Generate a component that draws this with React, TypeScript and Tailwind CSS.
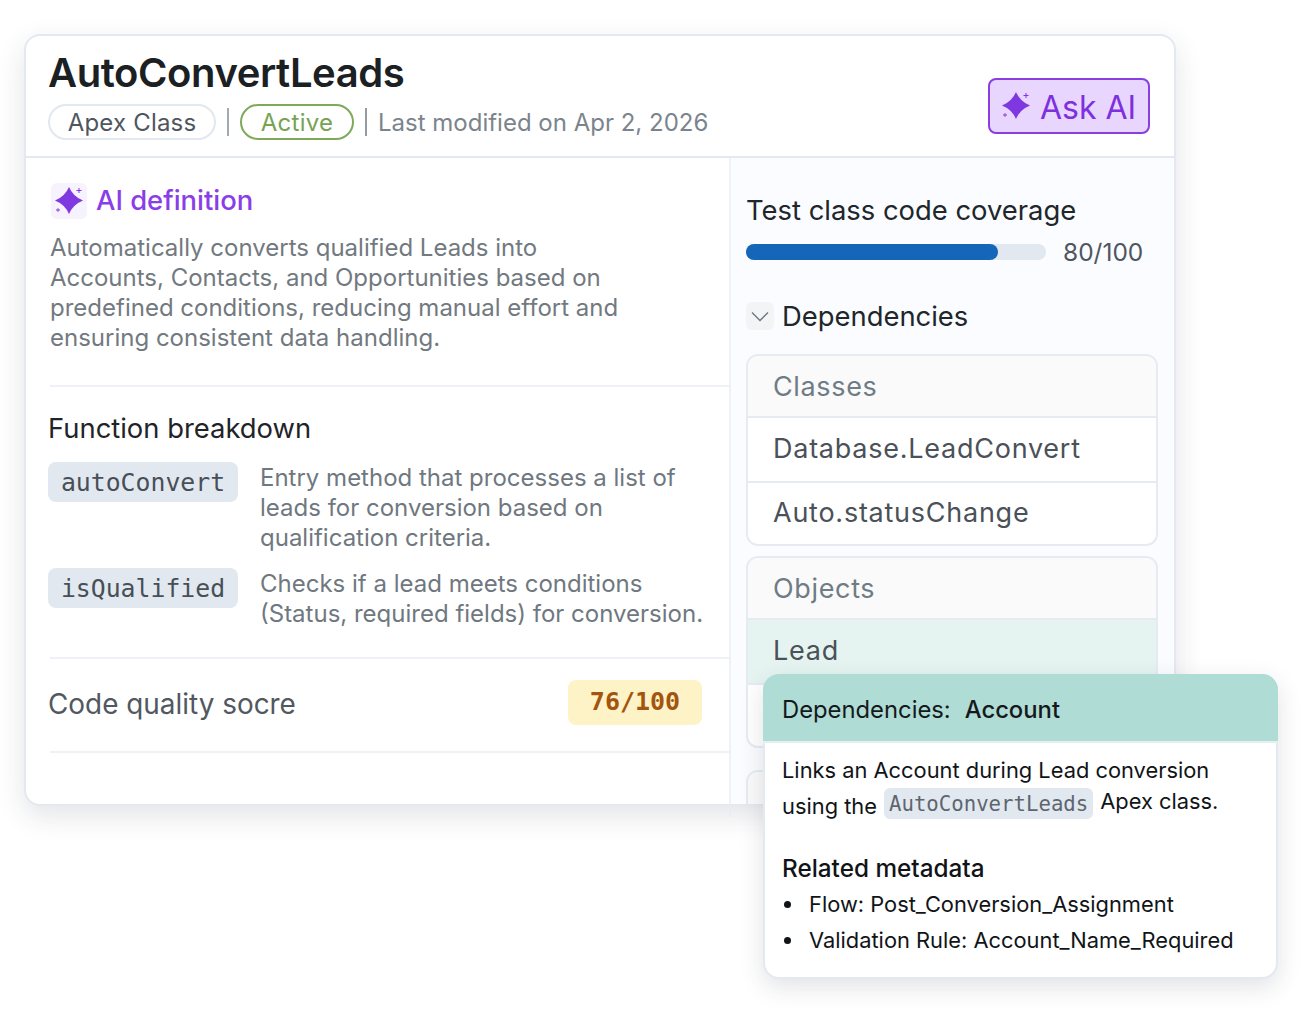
const inter = "font-['Inter',sans-serif]";
const mono = "font-['DejaVu_Sans_Mono',monospace]";

function Sparkle({ className }: { className?: string }) {
  return (
    <svg viewBox="0 0 32 32" className={className} fill="currentColor">
      <path d="M16 2Q20 11.5 30 15.5 20 19.5 16 29 12 19.5 2 15.5 12 11.5 16 2Z" />
      <path d="M25.5 3h1v2h2v1h-2v2h-1V6h-2V5h2z" />
      <path d="M4.6 23h.8v1.6H7v.8H5.4V27h-.8v-1.6H3v-.8h1.6z" />
    </svg>
  );
}

function Chevron() {
  return (
    <svg viewBox="0 0 18 18" className="w-[18px] h-[18px] text-[#6b7680]" fill="none" stroke="currentColor" strokeWidth="1.3">
      <path d="M1 5.5l8 8 8-8" />
    </svg>
  );
}

function Group({ title, items }: { title: string; items: { label: string; active?: boolean }[] }) {
  return (
    <div className="border-2 border-[#e6ebf2] rounded-xl overflow-hidden bg-white">
      <div className="h-[60px] bg-[#fafafa] pt-[2px] pl-[25px] flex items-center text-[27px] tracking-[0.65px] text-[#6f7c85]">{title}</div>
      {items.map((item, i) => (
        <div
          key={i}
          className={`h-[65px] last:h-[63px] border-t-2 border-[#e6ebf2] pl-[25px] flex items-center text-[27px] tracking-[0.75px] text-[#4a5159] ${item.active ? "bg-[#e5f4f0]" : ""}`}
        >
          {item.label}
        </div>
      ))}
    </div>
  );
}

function Breakdown({ name, lines }: { name: string; lines: string[] }) {
  return (
    <div className="flex items-start">
      <code className={`w-[190px] h-10 shrink-0 rounded-lg bg-[#e2e8f0] flex items-center justify-center text-[24.8px] text-[#474f57] ${mono}`}>{name}</code>
      <div className="ml-[22px] mt-[1px] text-[24px] leading-[30px] text-[#6f7880] whitespace-nowrap">
        {lines.map((l) => (
          <div key={l}>{l}</div>
        ))}
      </div>
    </div>
  );
}

export default function App() {
  return (
    <div className={`relative w-[1312px] h-[1010px] bg-white pl-[24px] pt-[34px] ${inter}`}>
      <div className="relative w-[1152px] h-[772px] border-2 border-[#e4e8f0] rounded-2xl bg-white shadow-[0_10px_28px_rgba(40,50,70,0.13)] flex flex-col">
        <header className="h-[122px] shrink-0 border-b-2 border-[#e4e8f0] pl-[22px] pr-6 flex justify-between items-start">
          <div>
            <h1 className="mt-[12px] text-[40px] leading-[50px] font-semibold tracking-[-0.42px] text-[#1b2023]">AutoConvertLeads</h1>
            <div className="mt-[5px] flex items-center">
              <span className="h-9 w-[168px] pt-[1px] rounded-full border-2 border-[#e2e8f0] flex items-center justify-center text-[24px] tracking-[0.2px] text-[#4f565e]">Apex Class</span>
              <span className="ml-[11px] w-[2px] h-7 bg-[#a3abb2]" />
              <span className="ml-[11px] h-9 w-[114px] pt-[1px] rounded-full border-2 border-[#7fa959] flex items-center justify-center text-[24px] tracking-[0.3px] text-[#77a353]">Active</span>
              <span className="ml-[11px] w-[2px] h-7 bg-[#949ca3]" />
              <span className="ml-[11px] pt-[2px] text-[24px] text-[#7b848c]">Last modified on Apr 2, 2026</span>
            </div>
          </div>
          <button className="mt-[42px] w-[162px] h-[56px] rounded-lg border-2 border-[#8a3de0] bg-[#e8d6ff] flex items-center pl-[10px] gap-[8px] text-[32px] text-[#7e30dd]">
            <Sparkle className="w-[32px] h-[32px] text-[#7f37e0]" />
            <span className="pt-[3px]">Ask AI</span>
          </button>
        </header>

        <div className="flex flex-1 min-h-0">
          <main className="w-[703px] shrink-0 pt-[22px]">
            <div className="pl-[25px] flex items-center">
              <span className="w-9 h-9 rounded-md bg-[#f6f2fe] flex items-center justify-center">
                <Sparkle className="w-[32px] h-[32px] text-[#8038e0]" />
              </span>
              <h2 className="ml-[9px] text-[27.4px] font-medium text-[#8a3ee8]">AI definition</h2>
            </div>
            <p className="ml-[24px] mt-[12px] text-[24px] leading-[30px] text-[#72797f] whitespace-nowrap">
              Automatically converts qualified Leads into
              <br />
              Accounts, Contacts, and Opportunities based on
              <br />
              predefined conditions, reducing manual effort and
              <br />
              ensuring consistent data handling.
            </p>
            <div className="ml-[24px] mt-[32px] h-[2px] bg-[#eef1f5]" />
            <section className="pl-[22px]">
              <h3 className="mt-[24px] text-[27.4px] leading-[34px] text-[#1f2428]">Function breakdown</h3>
              <div className="mt-[17px] flex flex-col gap-[15px]">
                <Breakdown name="autoConvert" lines={["Entry method that processes a list of", "leads for conversion based on", "qualification criteria."]} />
                <Breakdown name="isQualified" lines={["Checks if a lead meets conditions", "(Status, required fields) for conversion."]} />
              </div>
            </section>
            <div className="ml-[24px] mt-[28px] h-[2px] bg-[#eef1f5]" />
            <div className="ml-[22px] mr-[27px] h-[92px] flex items-center justify-between">
              <span className="text-[27.9px] text-[#51585f]">Code quality socre</span>
              <span className={`mb-[6px] w-[134px] h-[45px] rounded-lg bg-[#fef3c7] flex items-center justify-center text-[25px] font-bold text-[#a3540f] ${mono}`}>76/100</span>
            </div>
            <div className="ml-[24px] h-[2px] bg-[#eef1f5]" />
          </main>

          <aside className="flex-1 min-w-0 h-[646px] overflow-hidden rounded-br-2xl border-l-2 border-[#eef1f5] bg-[#fafcff] pl-[15px] pr-[16px]">
            <div className="mt-[33px] text-[27.4px] leading-[38px] text-[#20262a]">Test class code coverage</div>
            <div className="mt-[5px] flex items-center">
              <div className="w-[300px] h-4 rounded-full bg-[#e2e8f0]">
                <div className="h-4 w-[252px] rounded-full bg-[#1565b8]" />
              </div>
              <span className="ml-[17px] text-[24.5px] text-[#4f565e]">80/100</span>
            </div>
            <div className="mt-[26px] flex items-center">
              <span className="w-7 h-7 rounded-md bg-[#f2f4f5] flex items-center justify-center">
                <Chevron />
              </span>
              <span className="ml-[8px] text-[27.4px] leading-[38px] text-[#20262a]">Dependencies</span>
            </div>
            <div className="mt-[19px] flex flex-col gap-[10px]">
              <Group title="Classes" items={[{ label: "Database.LeadConvert" }, { label: "Auto.statusChange" }]} />
              <Group title="Objects" items={[{ label: "Lead", active: true }, { label: "" }]} />
              {/* third group is cut off by the bottom edge */}
              <div className="mt-[12px]">
                <Group title="" items={[]} />
              </div>
            </div>
          </aside>
        </div>
        {/* divider runs on past the bottom edge of the card */}
        <div className="absolute left-[703px] top-[770px] w-[2px] h-[11px] bg-[#e9edf2]" />
      </div>

      <div className="absolute left-[763px] top-[674px] w-[515px] h-[305px] rounded-2xl border-2 border-[#e4e8f0] bg-white shadow-[0_8px_24px_rgba(40,50,70,0.14)]">
        <div className="-mx-[2px] -mt-[2px] h-[69px] rounded-t-2xl bg-[#b0dcd6] border-b-2 border-[#e4f0ee] pt-[4px] pl-[19px] flex items-center text-[23.8px] text-[#15191c]">
          Dependencies:
          <span className="ml-[14px] font-medium">Account</span>
        </div>
        <div className="pl-[17px] pt-[11px] text-[21.85px] text-[#111417]">
          <div className="leading-[32px]">Links an Account during Lead conversion</div>
          <div className="mt-[2px] flex items-start leading-[32px] whitespace-nowrap">
            <span className="mt-[2px]">using the</span>
            <code className={`ml-[7px] h-[31px] px-[5px] rounded-md bg-[#e2e8f0] flex items-center text-[20.7px] text-[#5d666e] ${mono}`}>AutoConvertLeads</code>
            <span className="ml-[7px] -mt-[3px]">Apex class.</span>
          </div>
          <div className="mt-[30px] text-[24.3px] leading-[32px] font-medium">Related metadata</div>
          <ul className="mt-[2px]">
            {["Flow: Post_Conversion_Assignment", "Validation Rule: Account_Name_Required"].map((t) => (
              <li key={t} className="flex items-center h-[36px]">
                <span className="ml-[2px] w-[7px] h-[7px] rounded-full bg-[#111417]" />
                <span className="ml-[18px]">{t}</span>
              </li>
            ))}
          </ul>
        </div>
      </div>
    </div>
  );
}
